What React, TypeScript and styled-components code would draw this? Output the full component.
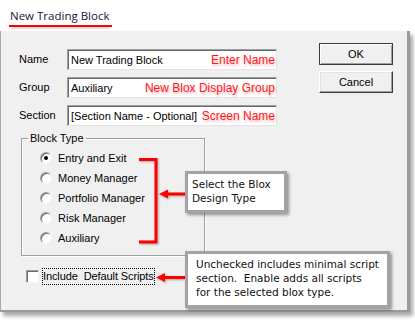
import React from "react";
import styled, { createGlobalStyle } from "styled-components";

const Global = createGlobalStyle`
  html, body {
    margin: 0;
    padding: 0;
    background: #ffffff;
  }
  * {
    box-sizing: border-box;
  }
`;

const Stage = styled.div`
  position: relative;
  width: 415px;
  height: 322px;
  overflow: hidden;
  font-family: "Liberation Sans", Arial, sans-serif;
  font-size: 11px;
  color: #000;
`;

const Header = styled.div`
  height: 31px;
  padding: 8px 0 0 9px;
`;

const Title = styled.div`
  display: inline-block;
  font-family: "Open Sans", "Noto Sans", sans-serif;
  font-size: 11.5px;
  line-height: 16px;
  color: #14143c;
  padding: 0 3px 1px 1px;
  border-bottom: 2px solid #ff0000;
  box-shadow: 0 3px 3px -2px rgba(0, 0, 0, 0.25);
`;

const Dialog = styled.div`
  width: 410px;
  height: 281px;
  background: #f0f0f0;
  border-left: 1px solid #a8a8a8;
  border-right: 3px solid #9a9a9a;
  border-bottom: 2px solid #9a9a9a;
  box-shadow: 3px 4px 4px rgba(0, 0, 0, 0.35);
  padding: 12px 0 0 18px;
  display: flex;
  flex-direction: column;
  align-items: flex-start;
`;

const TopRow = styled.div`
  display: flex;
  align-items: flex-start;
`;

const Form = styled.div`
  margin-top: 6px;
  display: grid;
  grid-template-columns: 48px 210px;
  grid-auto-rows: 21px;
  row-gap: 7px;
  align-items: center;
`;

const Label = styled.span`
  line-height: 13px;
`;

const TextBox = styled.div`
  height: 21px;
  background: #fff;
  border: 1px solid;
  border-color: #a0a0a0 #e3e3e3 #e3e3e3 #a0a0a0;
  box-shadow: inset 1px 1px 0 #696969;
  display: flex;
  align-items: center;
  justify-content: space-between;
  padding: 0 1px 0 3px;
  white-space: nowrap;
`;

const Hint = styled.span`
  font-size: 12px;
  color: #ff1a1a;
  text-shadow: 1px 2px 2px rgba(200, 0, 40, 0.3);
`;

const ButtonCol = styled.div`
  margin-left: 42px;
  display: flex;
  flex-direction: column;
  gap: 6px;
`;

const Button = styled.div<{ $default?: boolean }>`
  width: 74px;
  height: 22px;
  display: flex;
  align-items: center;
  justify-content: center;
  background: #f0f0f0;
  border: 1px solid ${(p) => (p.$default ? "#3c3c3c" : "#ffffff")};
  border-right-color: #3c3c3c;
  border-bottom-color: #3c3c3c;
  box-shadow: ${(p) =>
    p.$default
      ? "inset 1px 1px 0 #ffffff, inset -1px -1px 0 #a0a0a0"
      : "inset -1px -1px 0 #a0a0a0, inset 1px 1px 0 #e3e3e3"};
`;

const GroupBox = styled.fieldset`
  margin: 6px 0 0 2px;
  width: 184px;
  padding: 3px 0 7px 18px;
  border: 1px solid #a0a0a0;
  box-shadow: inset 1px 1px 0 #fff, 1px 1px 0 #fff;
  display: flex;
  flex-direction: column;
`;

const Legend = styled.legend`
  margin-left: -12px;
  padding: 0 2px;
  line-height: 13px;
`;

const RadioRow = styled.div`
  height: 20px;
  display: flex;
  align-items: center;
  gap: 6px;
`;

const RadioDot = styled.span<{ $on?: boolean }>`
  width: 12px;
  height: 12px;
  border-radius: 50%;
  background: #fff;
  border: 1px solid;
  border-color: #a0a0a0 #f4f4f4 #f4f4f4 #a0a0a0;
  box-shadow: inset 1px 1px 0 #6a6a6a;
  display: flex;
  align-items: center;
  justify-content: center;
  &::after {
    content: "";
    width: 4px;
    height: 4px;
    border-radius: 50%;
    background: ${(p) => (p.$on ? "#000" : "transparent")};
  }
`;

const CheckRow = styled.div`
  margin: 13px 0 0 7px;
  display: flex;
  align-items: center;
  gap: 4px;
`;

const CheckBox = styled.span`
  width: 13px;
  height: 13px;
  background: #fff;
  border: 1px solid;
  border-color: #a0a0a0 #f4f4f4 #f4f4f4 #a0a0a0;
  box-shadow: inset 1px 1px 0 #6a6a6a;
`;

const FocusLabel = styled.span`
  white-space: pre;
  padding: 1px 0 1px 0;
  line-height: 13px;
  letter-spacing: -0.1px;
  outline: 1px dotted #000;
`;

type Box = { $x: number; $y: number; $w: number; $h: number; $padLeft: number };

const Callout = styled.div<Box>`
  position: absolute;
  left: ${(p) => p.$x}px;
  top: ${(p) => p.$y}px;
  width: ${(p) => p.$w}px;
  height: ${(p) => p.$h}px;
  padding: 3px 0 0 ${(p) => p.$padLeft}px;
  background: #fff;
  border: 3px solid #a3a3a3;
  box-shadow: 2px 2px 3px rgba(0, 0, 0, 0.4);
  font-family: "DejaVu Sans", Verdana, sans-serif;
  font-size: 10.5px;
  line-height: 14px;
  color: #111;
`;

const Marks = styled.svg`
  position: absolute;
  left: 0;
  top: 0;
  filter: drop-shadow(1px 1px 1px rgba(0, 0, 0, 0.3));
`;

const blockTypes = [
  "Entry and Exit",
  "Money Manager",
  "Portfolio Manager",
  "Risk Manager",
  "Auxiliary",
];

export default function App() {
  return (
    <Stage>
      <Global />
      <Header>
        <Title>New Trading Block</Title>
      </Header>
      <Dialog>
        <TopRow>
          <Form>
            <Label>Name</Label>
            <TextBox>
              <span>New Trading Block</span>
              <Hint>Enter Name</Hint>
            </TextBox>
            <Label>Group</Label>
            <TextBox>
              <span>Auxiliary</span>
              <Hint>New Blox Display Group</Hint>
            </TextBox>
            <Label>Section</Label>
            <TextBox>
              <span>[Section Name - Optional]</span>
              <Hint>Screen Name</Hint>
            </TextBox>
          </Form>
          <ButtonCol>
            <Button $default>OK</Button>
            <Button>Cancel</Button>
          </ButtonCol>
        </TopRow>
        <GroupBox>
          <Legend>Block Type</Legend>
          {blockTypes.map((t, i) => (
            <RadioRow key={t}>
              <RadioDot $on={i === 0} />
              <span>{t}</span>
            </RadioRow>
          ))}
        </GroupBox>
        <CheckRow>
          <CheckBox />
          <FocusLabel>Include  Default Scripts</FocusLabel>
        </CheckRow>
      </Dialog>

      {/* annotations: bracket, arrows, callouts */}
      <Marks width={415} height={322}>
        <g stroke="#ff0000" strokeWidth={3} fill="none">
          <polyline points="139,159.5 156,159.5 156,242 139,242" />
          <line x1={166} y1={194} x2={185} y2={194} />
          <line x1={163} y1={277.5} x2={185} y2={277.5} />
        </g>
        <polygon points="159,194 168,189.5 168,198.5" fill="#ff0000" />
        <polygon points="156,277.5 165,273 165,282" fill="#ff0000" />
      </Marks>
      <Callout $x={185} $y={171} $w={102} $h={42} $padLeft={4}>
        Select the Blox
        <br />
        Design Type
      </Callout>
      <Callout $x={185} $y={251} $w={205} $h={57} $padLeft={8}>
        Unchecked includes minimal script
        <br />
        section.&nbsp; Enable adds all scripts
        <br />
        for the selected blox type.
      </Callout>
    </Stage>
  );
}
